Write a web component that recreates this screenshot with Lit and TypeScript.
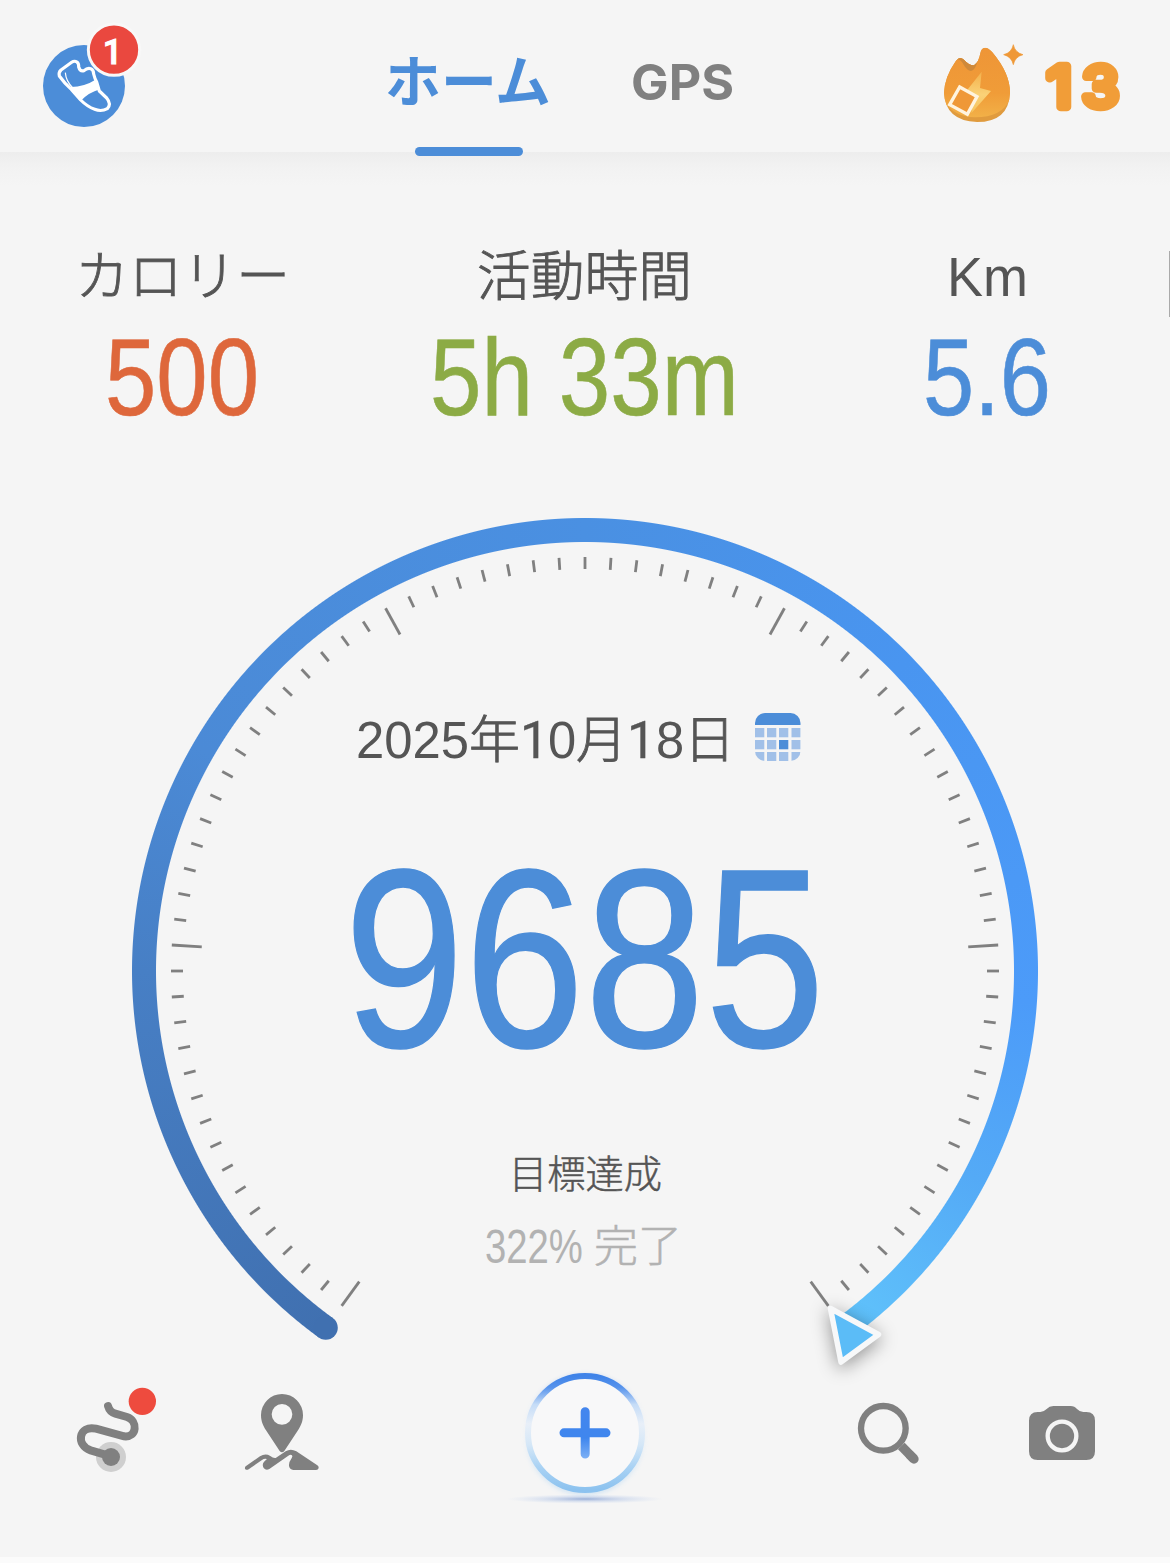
import { LitElement, html, svg, css } from "lit";
import { customElement } from "lit/decorators.js";

interface TextBox {
  w: number;
  h: number;
  base: number;
  size: number;
  cls: string;
}

/** One run of text fitted to an exact advance width. */
const run = (text: string, o: TextBox) => html`
  <svg class="run ${o.cls}" width=${o.w} height=${o.h} viewBox="0 0 ${o.w} ${o.h}">
    <text x="0" y=${o.base} font-size=${o.size} textLength=${o.w} lengthAdjust="spacingAndGlyphs">${text}</text>
  </svg>
`;

const CX = 585;
const CY = 971;
const START = 36;

/** Point on the dial; angle runs clockwise from the bottom. */
const polar = (deg: number, r: number): [number, number] => {
  const a = (deg * Math.PI) / 180;
  return [CX - r * Math.sin(a), CY + r * Math.cos(a)];
};

@customElement("step-gauge")
class StepGauge extends LitElement {
  static styles = css`
    :host {
      display: grid;
    }
    .arc,
    .face {
      grid-area: 1 / 1;
    }
    .face {
      display: block;
      overflow: visible;
      z-index: 1;
    }
    .arc {
      width: 906px;
      height: 906px;
      margin: 86px 0 0 132px;
      background: conic-gradient(
        from 216deg,
        #4070b0 0deg,
        #477fc5 54deg,
        #4b8ad6 84deg,
        #4a90e2 144deg,
        #4995f0 190deg,
        #4c9bf9 238deg,
        #54aaf6 262deg,
        #60c3fb 288deg,
        transparent 288deg
      );
      -webkit-mask: radial-gradient(circle, transparent 428.5px, #000 429.5px, #000 452.5px, transparent 453.5px);
      mask: radial-gradient(circle, transparent 428.5px, #000 429.5px, #000 452.5px, transparent 453.5px);
    }
    .tick {
      stroke: #808080;
      stroke-width: 2.8;
    }
    .pointer {
      fill: #5bbcf7;
      stroke: #f7f8f9;
      stroke-width: 5.5;
      stroke-linejoin: round;
      filter: drop-shadow(0 4px 9px rgba(0, 0, 0, 0.4));
    }
  `;

  private ticks() {
    return Array.from({ length: 81 }, (_, i) => {
      const deg = START + i * 3.6;
      const [x1, y1] = polar(deg, 414);
      const [x2, y2] = polar(deg, i % 16 === 0 ? 384 : 402);
      return svg`<line class="tick" x1=${x1} y1=${y1} x2=${x2} y2=${y2} />`;
    });
  }

  render() {
    const [sx, sy] = polar(START, 441);
    return html`
      <div class="arc"></div>
      <svg class="face" width="1170" height="933" viewBox="0 432 1170 933">
        <circle cx=${sx} cy=${sy} r="12" fill="#4070b0" />
        ${this.ticks()}
        <path class="pointer" d="M830.5,1308.5L878.5,1334.5L841,1362Z" />
      </svg>
    `;
  }
}

@customElement("app-root")
class AppRoot extends LitElement {
  static styles = css`
    :host {
      display: block;
    }
    .page {
      width: 1170px;
      height: 1563px;
      background: #f5f5f5;
      display: flex;
      flex-direction: column;
      overflow: hidden;
    }
    svg {
      display: block;
      flex: none;
      overflow: visible;
    }
    .run {
      font-family: "Liberation Sans", "Noto Sans CJK JP", sans-serif;
      fill: #555;
    }
    .jp {
      font-family: "Noto Sans CJK JP", sans-serif;
      font-weight: 300;
      stroke: #555;
      stroke-width: 0.9;
    }
    .small {
      stroke-width: 0.5;
    }
    .one {
      font-family: Roboto, sans-serif;
      stroke: #555;
      stroke-width: 0.3;
    }
    .header {
      height: 152px;
      flex: none;
      display: flex;
      padding-left: 40px;
    }
    .shade {
      height: 34px;
      margin-bottom: -34px;
      flex: none;
      background: linear-gradient(#ededed, #f2f2f2 45%, #f5f5f5);
    }
    .tab {
      display: flex;
      flex-direction: column;
      align-items: center;
    }
    .home {
      margin-left: 246px;
      width: 162px;
      z-index: 1;
    }
    .gps {
      margin-left: 81px;
    }
    .bar {
      width: 108px;
      height: 9px;
      flex: none;
      border-radius: 4.5px;
      background: #4c8dd8;
    }
    .tab-on {
      font-family: "Noto Sans CJK JP", sans-serif;
      font-weight: 700;
      fill: #4c8dd8;
      margin-right: 3px;
    }
    .tab-off {
      font-family: Inter, sans-serif;
      font-weight: 700;
      fill: #808080;
    }
    .streak {
      margin-left: 206px;
      display: flex;
    }
    .streak-count {
      margin-left: 17px;
      display: flex;
      gap: 10px;
    }
    .fat {
      font-family: Inter, sans-serif;
      font-weight: 400;
      fill: #f19d38;
      stroke: #f19d38;
      stroke-width: 8.5;
      stroke-linejoin: round;
      stroke-linecap: round;
    }
    .badge-text {
      font-family: Roboto, sans-serif;
      font-weight: 500;
      fill: #fff;
      stroke: #fff;
      stroke-width: 3;
    }
    .metrics {
      height: 280px;
      flex: none;
      display: grid;
      grid-template-columns: 364px 441px 364px 1px;
      z-index: 1;
    }
    .metric {
      display: flex;
      flex-direction: column;
      align-items: center;
    }
    .next {
      background: #aaa;
      height: 66px;
      margin-top: 99px;
    }
    .orange {
      fill: #de673b;
      stroke: #de673b;
      stroke-width: 0.6;
    }
    .green {
      fill: #8cab45;
      stroke: #8cab45;
      stroke-width: 0.6;
    }
    .blue {
      fill: #4c8dd8;
      stroke: #4c8dd8;
      stroke-width: 0.6;
    }
    .big {
      stroke-width: 1.4;
    }
    .dial {
      height: 933px;
      flex: none;
      display: grid;
    }
    .dial > * {
      grid-area: 1 / 1;
    }
    .readout {
      display: flex;
      flex-direction: column;
      align-items: center;
      padding-top: 268px;
      z-index: 1;
    }
    .date {
      display: flex;
      align-self: flex-start;
      padding-left: 355.5px;
    }
    .calendar {
      margin-left: 19.5px;
    }
    .count {
      margin-top: 50px;
      margin-right: 1px;
    }
    .status {
      margin-top: 60px;
    }
    .percent {
      display: flex;
      margin-top: 10px;
      align-self: flex-start;
      padding-left: 485px;
    }
    .done {
      margin-left: 11px;
    }
    .muted {
      fill: #b2b2b2;
      stroke: #b2b2b2;
    }
    .thin {
      stroke: none;
    }
    .narrow {
      transform: scaleX(0.806);
    }
    .nav {
      height: 192px;
      flex: none;
      display: flex;
      padding-left: 75px;
    }
    .pin {
      margin-left: 83px;
    }
    .add {
      margin-left: 183px;
    }
    .search {
      margin-left: 191px;
    }
    .camera {
      margin-left: 104px;
    }
    .footer {
      height: 6px;
      background: #fbfbfb;
    }
  `;

  private shoes() {
    return html`
      <svg width="102" height="152" viewBox="60 -30 306 456">
        <circle cx="192" cy="228" r="123" fill="#4c8dd8" />
        <path
          d="M118,198Q115,187 123,180L155,157Q163,151 171,156Q177,161 176,171Q180,185 192,182Q202,173 212,176Q221,180 221,192Q224,205 230,216L238,243L260,264Q275,282 262,296Q244,306 224,298Q202,290 182,270L154,238Q132,218 118,198Z"
          fill="none" stroke="#fff" stroke-width="9.500" stroke-linejoin="round" />
        <path d="M146,231Q190,233 229,208L240,238Q206,247 181,274Z" fill="#fff" />
        <path d="M136,188Q138,214 158,233" fill="none" stroke="#fff" stroke-width="3.500" />
        <circle cx="282" cy="119" r="77" fill="#ea483f" stroke="#f8f8f8" stroke-width="9" />
        <text class="badge-text" x="278" y="161" font-size="104" text-anchor="middle">1</text>
      </svg>
    `;
  }

  private flame() {
    return html`
      <svg width="90" height="152" viewBox="60 -90 270 456">
        <defs>
          <linearGradient id="fire" x1="0" y1="50" x2="0" y2="264" gradientUnits="userSpaceOnUse">
            <stop offset="0" stop-color="#ee9537" />
            <stop offset=".65" stop-color="#f09c38" />
            <stop offset="1" stop-color="#f2b148" />
          </linearGradient>
          <linearGradient id="bolt" x1="0" y1="0" x2="0" y2="1">
            <stop offset="0" stop-color="#f3b04b" />
            <stop offset=".55" stop-color="#fad277" />
            <stop offset="1" stop-color="#f6c25c" />
          </linearGradient>
          <clipPath id="body">
            <path d="M195,53Q206,53 217,67Q270,130 270,188Q266,276 171,276Q76,272 72,188Q74,140 108,92Q119,77 132,89Q148,107 162,106Q176,98 181,70Q184,54 195,53Z" />
          </clipPath>
        </defs>
        <g clip-path="url(#body)">
          <rect x="60" y="40" width="220" height="240" fill="#e09b3e" />
          <path d="M60,40H280V160Q276,262 165,262Q85,258 60,190Z" fill="url(#fire)" />
          <path d="M110,88Q122,88 131,104Q141,122 153,123Q166,120 173,92L160,100L122,76Z" fill="#cf893a" />
        </g>
        <path d="M185,125L122,205L162,200L154,250L213,183L180,174Z" fill="url(#bolt)" />
        <path d="M119,171L171,200L142,253L89,224Z" fill="#ef9837" stroke="#fff4df" stroke-width="10" />
        <path d="M280,44Q285,68 309,74Q285,80 280,104Q275,80 251,74Q275,68 280,44Z" fill="#ef9837" stroke="#ef9837" stroke-width="2" />
      </svg>
    `;
  }

  private calendar() {
    const cells = [];
    for (let r = 0; r < 3; r++) {
      for (let c = 0; c < 4; c++) {
        cells.push(
          svg`<rect x=${[0, 12, 24, 36.5][c]} y=${15 + r * 12} width="9.3" height="9.3" fill=${r === 1 && c === 2 ? "#4c8dd8" : "#a1c0e8"} />`,
        );
      }
    }
    return html`
      <svg class="calendar" width="46" height="80" viewBox="0 -13 46 80">
        <defs>
          <clipPath id="cal"><rect width="45.500" height="48" rx="10" /></clipPath>
        </defs>
        <g clip-path="url(#cal)">
          <rect width="46" height="12" fill="#4c8dd8" />
          ${cells}
        </g>
      </svg>
    `;
  }

  private nav() {
    return html`
      <div class="nav">
        <svg width="84" height="150" viewBox="75 -15 252 450">
          <circle cx="183" cy="261" r="45" fill="#cfcfcf" />
          <path
            d="M174,108Q179,126 196,131L231,141C264,152 262,204 222,199L138,176C86,164 76,226 122,241L183,259"
            fill="none" stroke="#808080" stroke-width="24" stroke-linecap="round" />
          <circle cx="183" cy="261" r="27" fill="#808080" />
          <circle cx="277" cy="94" r="41" fill="#ee4b3e" />
        </svg>
        <svg class="pin" width="80" height="150" viewBox="576 -15 240 450" fill="#808080">
          <path
            fill-rule="evenodd"
            d="M633,135a63,63 0 0 1 126,0c0,20 -7,33 -15,46L703,243q-7,8 -14,0L648,181c-8,-13 -15,-26 -15,-46ZM665,133a31,31 0 1 0 62,0a31,31 0 1 0 -62,0Z" />
          <path
            d="M587,289L630,259Q646,249 661,258Q669,265 677,264L707,244Q722,235 739,244L802,286Q808,291 805,296Q803,300 797,300L730,300Q719,299 717,288Q716,276 724,266Q731,256 722,254Q719,254 715,257L658,297Q648,303 641,294Q634,282 645,272Q655,266 646,266Q641,266 636,270L596,298Q589,302 585,296Q584,292 587,289Z" />
        </svg>
        <svg class="add" width="160" height="150" viewBox="15 45 480 450">
          <defs>
            <linearGradient id="rim" x1="0" y1="0" x2="0" y2="1">
              <stop offset="0" stop-color="#3f83e8" />
              <stop offset=".1" stop-color="#5793ec" />
              <stop offset=".25" stop-color="#c5dcf7" />
              <stop offset=".42" stop-color="#e8eff8" />
              <stop offset=".6" stop-color="#d5e7f7" />
              <stop offset=".8" stop-color="#a9d2f4" />
              <stop offset="1" stop-color="#8cc2ef" />
            </linearGradient>
            <linearGradient id="plus" x1="0" y1="172" x2="0" y2="325" gradientUnits="userSpaceOnUse">
              <stop offset="0" stop-color="#4486ee" />
              <stop offset=".6" stop-color="#3f86ee" />
              <stop offset="1" stop-color="#7db0f5" />
            </linearGradient>
            <radialGradient id="floor">
              <stop offset="0" stop-color="#8ba3d2" stop-opacity=".85" />
              <stop offset=".5" stop-color="#b3c5e6" stop-opacity=".45" />
              <stop offset="1" stop-color="#c5d5f0" stop-opacity="0" />
            </radialGradient>
            <filter id="glow" x="-20%" y="-20%" width="140%" height="140%">
              <feGaussianBlur stdDeviation="8" />
            </filter>
          </defs>
          <ellipse cx="255" cy="447" rx="235" ry="14" fill="url(#floor)" />
          <circle cx="255" cy="254" r="172" fill="none" stroke="url(#rim)" stroke-width="16" opacity=".4" filter="url(#glow)" />
          <circle cx="255" cy="249" r="171" fill="#f8f8f9" stroke="url(#rim)" stroke-width="18" />
          <path
            d="M242,185a13,13 0 0 1 27,0V235H318a13,13 0 0 1 0,27H269V312a13,13 0 0 1 -27,0V262H192a13,13 0 0 1 0,-27H242Z"
            fill="url(#plus)" />
        </svg>
        <svg class="search" width="66" height="150" viewBox="228 375 198 450" fill="none" stroke="#808080">
          <circle cx="310" cy="565" r="67" stroke-width="19" />
          <path d="M364,618L402,657" stroke-width="28" />
          <path d="M390,645L402,657" stroke-width="28" stroke-linecap="round" />
        </svg>
        <svg class="camera" width="72" height="150" viewBox="738 375 216 450">
          <path
            d="M747,542Q747,516 773,516H781Q792,515 800,507Q808,498 820,498H872Q884,498 891,507Q898,515 910,516H919Q945,516 945,542V634Q945,660 919,660H773Q747,660 747,634Z"
            fill="#808080" />
          <circle cx="846" cy="588" r="43" fill="none" stroke="#f5f5f5" stroke-width="13" />
        </svg>
      </div>
    `;
  }

  render() {
    const label = { h: 160, base: 144, size: 54 };
    const value = { h: 120, base: 103, size: 109 };
    const date = { h: 80, base: 58, size: 51 };
    const kanji = { ...date, w: 51, cls: "jp" };
    const digit = { ...date, w: 28.2, cls: "" };
    const one = { ...date, size: 51, w: 28.6, cls: "one" };
    return html`
      <div class="page">
        <div class="header">
          ${this.shoes()}
          <div class="tab home">
            ${run("ホーム", { w: 166, h: 147, base: 102, size: 56, cls: "tab-on" })}
            <div class="bar"></div>
          </div>
          <div class="tab gps">${run("GPS", { w: 103, h: 147, base: 100, size: 49, cls: "tab-off" })}</div>
          <div class="streak">
            ${this.flame()}
            <div class="streak-count">
              ${run("1", { w: 25, h: 147, base: 107, size: 56, cls: "fat" })}
              ${run("3", { w: 37, h: 147, base: 107, size: 56, cls: "fat" })}
            </div>
          </div>
        </div>
        <div class="shade"></div>

        <div class="metrics">
          <div class="metric">
            ${run("カロリー", { ...label, w: 215, cls: "jp" })} ${run("500", { ...value, w: 154, cls: "orange" })}
          </div>
          <div class="metric">
            ${run("活動時間", { ...label, w: 215, cls: "jp" })} ${run("5h 33m", { ...value, w: 309, cls: "green" })}
          </div>
          <div class="metric">
            ${run("Km", { ...label, size: 55.5, w: 81, cls: "" })} ${run("5.6", { ...value, w: 128, cls: "blue" })}
          </div>
          <div class="next"></div>
        </div>

        <div class="dial">
          <step-gauge></step-gauge>
          <div class="readout">
            <div class="date">
              ${run("2025", { ...date, w: 113, cls: "" })} ${run("年", kanji)} ${run("1", one)} ${run("0", digit)}
              ${run("月", kanji)} ${run("1", one)} ${run("8", digit)} ${run("日", kanji)} ${this.calendar()}
            </div>
            <div class="count">${run("9685", { w: 481, h: 250, base: 217, size: 254.5, cls: "blue big" })}</div>
            <div class="status">${run("目標達成", { w: 153, h: 60, base: 47.5, size: 38.5, cls: "jp small" })}</div>
            <div class="percent">
              <svg class="run muted thin" width="98" height="70" viewBox="0 0 98 70">
                <text class="narrow" x="0" y="53" font-size="47.5">322%</text>
              </svg>
              <div class="done">${run("完了", { w: 88, h: 70, base: 52, size: 44, cls: "jp muted small" })}</div>
            </div>
          </div>
        </div>

        ${this.nav()}
        <div class="footer"></div>
      </div>
    `;
  }
}
